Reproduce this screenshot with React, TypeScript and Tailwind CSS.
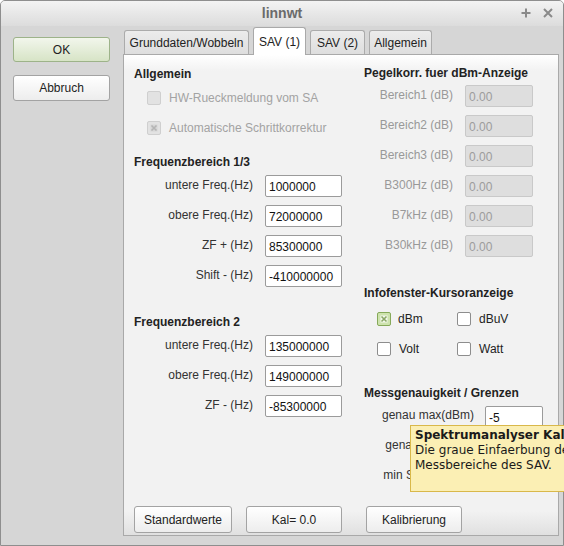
import type { ReactNode } from "react";

const font = "font-['Liberation_Sans',Arial,sans-serif]";

function Btn({ children, className }: { children: ReactNode; className?: string }) {
  return (
    <div
      className={`flex items-center justify-center rounded-[3px] border border-[#a3a3a3] bg-linear-to-b from-white to-[#ededed] text-[12px] text-[#222] ${className ?? ""}`}
    >
      {children}
    </div>
  );
}

function Field({ value, disabled, w }: { value: string; disabled?: boolean; w: string }) {
  return (
    <div
      className={`flex h-[22px] ${w} items-center rounded-[2px] border pl-[3px] pt-[2px] text-[12px] ${
        disabled
          ? "border-[#c9c9c9] bg-[#dedede] text-[#9c9c9c]"
          : "border-[#9b9b9b] bg-white text-[#111]"
      }`}
    >
      {value}
    </div>
  );
}

function Cross({ on }: { on?: boolean }) {
  return (
    <svg width="8" height="8" viewBox="0 0 8 8">
      <rect x="0.5" y="0.5" width="7" height="7" fill={on ? "#f4f8ee" : "#d6d6d6"} />
      <path d="M1.5 1.5 L6.5 6.5 M6.5 1.5 L1.5 6.5" stroke={on ? "#8aa866" : "#b5b5b5"} strokeWidth="1.6" />
    </svg>
  );
}

function Check({ state }: { state: "off" | "on" | "disabled" | "disabledOn" }) {
  const base = "flex h-[14px] w-[14px] shrink-0 items-center justify-center rounded-[2px] border";
  if (state === "disabled" || state === "disabledOn")
    return (
      <div className={`${base} border-[#cfcfcf] bg-[#e2e2e2]`}>
        {state === "disabledOn" && <Cross />}
      </div>
    );
  if (state === "on")
    return (
      <div className={`${base} border-[#86a95a] bg-[#cde3ad]`}>
        <Cross on />
      </div>
    );
  return <div className={`${base} border-[#8d8d8d] bg-white`} />;
}

function Heading({ children, className }: { children: ReactNode; className?: string }) {
  return (
    <div className={`flex items-center text-[12px] font-bold text-[#222] ${className ?? ""}`}>{children}</div>
  );
}

function FreqRow({ label, value }: { label: string; value: string }) {
  return (
    <div className="flex h-[30px] items-center">
      <div className="w-[119px] pb-[3px] text-right text-[12px] text-[#333]">{label}</div>
      <div className="ml-[12px]">
        <Field value={value} w="w-[77px]" />
      </div>
    </div>
  );
}

function PegelRow({ label }: { label: string }) {
  return (
    <div className="flex h-[30px] items-center">
      <div className="w-[89px] pb-[3px] text-right text-[12px] text-[#999]">{label}</div>
      <div className="ml-[12px]">
        <Field value="0.00" disabled w="w-[68px]" />
      </div>
    </div>
  );
}

const tabs = [
  { label: "Grunddaten/Wobbeln", w: "w-[125px]" },
  { label: "SAV (1)", w: "w-[53px]", active: true },
  { label: "SAV (2)", w: "w-[55px]" },
  { label: "Allgemein", w: "w-[63px]" },
];

export default function App() {
  return (
    <div className={`relative h-[546px] w-[564px] overflow-hidden ${font}`}>
      <div className="flex h-[546px] w-[564px] flex-col rounded-t-[5px] border border-[#8e8e8e] bg-[#d6d6d6]">
        {/* title bar */}
        <div className="relative flex h-[25px] items-center justify-center rounded-t-[4px] bg-linear-to-b from-[#f3f3f3] to-[#dcdcdc]">
          <span className="text-[14px] font-bold text-[#6b6b6b]">linnwt</span>
          <div className="absolute right-[10px] top-[7px] flex items-center gap-[12px]">
            <svg width="10" height="10" viewBox="0 0 10 10">
              <path d="M5 0.5 V9.5 M0.5 5 H9.5" stroke="#8a8a8a" strokeWidth="2" />
            </svg>
            <svg width="10" height="10" viewBox="0 0 10 10">
              <path d="M1 1 L9 9 M9 1 L1 9" stroke="#8a8a8a" strokeWidth="2" />
            </svg>
          </div>
        </div>

        {/* body */}
        <div className="flex flex-1">
          <div className="flex w-[122px] shrink-0 flex-col pl-[12px] pt-[11px]">
            <div className="flex h-[25px] w-[97px] items-center justify-center rounded-[3px] border border-[#9db389] bg-linear-to-b from-[#f2f6ec] to-[#d7e4c6] text-[12px] text-[#222]">
              OK
            </div>
            <Btn className="mt-[13px] h-[26px] w-[97px]">Abbruch</Btn>
          </div>

          <div className="flex flex-1 flex-col pr-[4px]">
            {/* tabs */}
            <div className="flex h-[28px] items-end gap-[4px] pl-[1px]">
              {tabs.map((t) =>
                t.active ? (
                  <div
                    key={t.label}
                    className={`relative z-10 -mb-px flex h-[28px] ${t.w} justify-center rounded-t-[3px] border border-b-0 border-[#a9a9a9] bg-white pt-[5px] text-[12px] text-[#222]`}
                  >
                    {t.label}
                  </div>
                ) : (
                  <div
                    key={t.label}
                    className={`flex h-[24px] ${t.w} justify-center rounded-t-[3px] border border-b-0 border-[#ababab] bg-linear-to-b from-[#ececec] to-[#dedede] pt-[3px] text-[12px] text-[#222]`}
                  >
                    {t.label}
                  </div>
                )
              )}
            </div>

            {/* panel */}
            <div className="flex h-[482px] w-[436px] flex-col border border-[#a9a9a9] bg-[linear-gradient(to_bottom,#ffffff_0px,#f2f2f2_16px,#f2f2f2_calc(100%_-_24px),#e0e0e0_100%)]">
              <div className="flex flex-1 pt-[9px]">
                {/* left column */}
                <div className="flex w-[240px] flex-col pl-[10px]">
                  <Heading className="h-[20px]">Allgemein</Heading>
                  <div className="flex h-[28px] items-center pl-[13px]">
                    <Check state="disabled" />
                    <span className="ml-[8px] text-[12px] text-[#a3a3a3]">HW-Rueckmeldung vom SA</span>
                  </div>
                  <div className="flex h-[32px] items-center pl-[13px]">
                    <Check state="disabledOn" />
                    <span className="ml-[8px] text-[12px] text-[#a3a3a3]">Automatische Schrittkorrektur</span>
                  </div>
                  <Heading className="mt-[9px] h-[18px]">Frequenzbereich 1/3</Heading>
                  <FreqRow label="untere Freq.(Hz)" value="1000000" />
                  <FreqRow label="obere Freq.(Hz)" value="72000000" />
                  <FreqRow label="ZF + (Hz)" value="85300000" />
                  <FreqRow label="Shift - (Hz)" value="-410000000" />
                  <Heading className="mt-[22px] h-[18px]">Frequenzbereich 2</Heading>
                  <FreqRow label="untere Freq.(Hz)" value="135000000" />
                  <FreqRow label="obere Freq.(Hz)" value="149000000" />
                  <FreqRow label="ZF - (Hz)" value="-85300000" />
                </div>

                {/* right column */}
                <div className="flex flex-1 flex-col">
                  <Heading className="h-[17px]">Pegelkorr. fuer dBm-Anzeige</Heading>
                  <PegelRow label="Bereich1 (dB)" />
                  <PegelRow label="Bereich2 (dB)" />
                  <PegelRow label="Bereich3 (dB)" />
                  <PegelRow label="B300Hz (dB)" />
                  <PegelRow label="B7kHz (dB)" />
                  <PegelRow label="B30kHz (dB)" />
                  <Heading className="mt-[23px] h-[18px]">Infofenster-Kursoranzeige</Heading>
                  <div className="mt-[2px] flex h-[30px] items-center pl-[13px]">
                    <div className="flex w-[80px] items-center">
                      <Check state="on" />
                      <span className="ml-[7px] text-[12px] text-[#222]">dBm</span>
                    </div>
                    <Check state="off" />
                    <span className="ml-[8px] text-[12px] text-[#222]">dBuV</span>
                  </div>
                  <div className="flex h-[30px] items-center pl-[13px]">
                    <div className="flex w-[80px] items-center">
                      <Check state="off" />
                      <span className="ml-[8px] text-[12px] text-[#222]">Volt</span>
                    </div>
                    <Check state="off" />
                    <span className="ml-[8px] text-[12px] text-[#222]">Watt</span>
                  </div>
                  <Heading className="mt-[20px] h-[18px]">Messgenauigkeit / Grenzen</Heading>
                  {[
                    ["genau max(dBm)", "-5"],
                    ["genau min(dBm)", "-70"],
                    ["min Schrittw.(Hz)", "100"],
                  ].map(([l, v]) => (
                    <div key={l} className="flex h-[30px] items-center">
                      <div className="w-[110px] whitespace-nowrap pb-[5px] text-right text-[12px] text-[#333]">{l}</div>
                      <div className="ml-[11px]">
                        <Field value={v} w="w-[58px]" />
                      </div>
                    </div>
                  ))}
                </div>
              </div>

              {/* bottom buttons */}
              <div className="flex pb-[2px] pl-[10px]">
                <Btn className="h-[27px] w-[98px]">Standardwerte</Btn>
                <Btn className="ml-[14px] h-[27px] w-[96px]">Kal= 0.0</Btn>
                <Btn className="ml-[24px] h-[27px] w-[96px]">Kalibrierung</Btn>
              </div>
            </div>
          </div>
        </div>
      </div>

      {/* tooltip */}
      <div className="absolute left-[410px] top-[425px] h-[67px] w-[200px] overflow-hidden border border-[#d9b84a] bg-[#fbefb4] px-[4px] pt-[2px] font-['DejaVu_Sans',sans-serif] text-[12px] leading-[15px] text-[#1a1a1a]">
        <div className="whitespace-nowrap font-bold">Spektrumanalyser Kalibrierung</div>
        <div className="whitespace-nowrap">Die graue Einfaerbung der Felder</div>
        <div className="whitespace-nowrap">Messbereiche des SAV.</div>
      </div>
    </div>
  );
}
